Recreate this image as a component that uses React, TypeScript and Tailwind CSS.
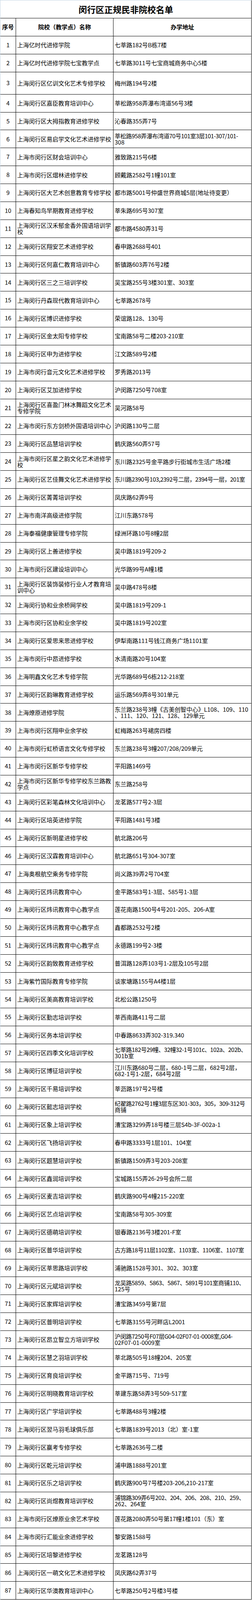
// The browser viewport stops at 4096px, so the rows are a little shorter than in the
// original sheet (4731px) to keep all 87 entries on the page.
const rows: [string, string][] = [
  ["上海亿时代进修学院", "七莘路182号B栋7楼"],
  ["上海亿时代进修学院七宝教学点", "七莘路3011号七宝商城商务中心5楼"],
  ["上海闵行区亿训文化艺术专修学校", "梅州路194号2楼"],
  ["上海闵行区嘉臣教育培训中心", "莘松路958弄瀑布湾道56号3楼"],
  ["上海闵行区大拇指教育进修学校", "沁春路355弄7号"],
  ["上海闵行区易启学文化艺术进修学校", "莘松路958弄瀑布湾道70号101室3层101-307/101-\n308"],
  ["上海市闵行区财会培训中心", "雅致路215号6楼"],
  ["上海市闵行区熠林进修学校", "顾戴路2582号1幢101室"],
  ["上海闵行区大艺术创意教育专修学校", "都市路5001号仲盛世界商城5层(地址待变更）"],
  ["上海春知鸟早期教育进修学校", "莘朱路695号307室"],
  ["上海闵行区汉禾郁金香外国语培训学\n校", "都市路4580弄31号"],
  ["上海闵行区翔安艺术进修学校", "春申路2688号401"],
  ["上海闵行区何嘉仁教育培训中心", "新镇路603弄76号2楼"],
  ["上海闵行区三之三培训学校", "吴宝路255号3楼301室、303室"],
  ["上海闵行丹森现代教育培训中心", "七莘路2678号"],
  ["上海闵行区博识进修学校", "荣谊路128、130号"],
  ["上海闵行区金太阳专修学校", "宝南路58号二楼203-210室"],
  ["上海闵行区申为进修学校", "江文路589号2楼"],
  ["上海市闵行音元文化艺术进修学校", "罗秀路2013号"],
  ["上海闵行区艾加进修学校", "沪闵路7250号708室"],
  ["上海闵行区喜盈门林冰舞蹈文化艺术\n专修学院", "吴河路58号"],
  ["上海市闵行东方剑桥外国语培训中心", "沪闵路130号二层"],
  ["上海闵行区品慧培训学校", "鹤庆路560弄57号"],
  ["上海市闵行区星之韵文化艺术进修学\n校", "东川路2325号金平路步行街城市生活广场2楼"],
  ["上海闵行区艺佳舞文化艺术进修学校", "东川路2390号103,2392号二层，2394号一层，201室"],
  ["上海闵行区菁菁培训学校", "凤庆路62弄9号"],
  ["上海市南洋高级进修学院", "江川东路578号"],
  ["上海泰福健康管理专修学院", "绿洲环路10号8幢2层"],
  ["上海闵行区上善进修学校", "吴中路1819号209-2"],
  ["上海市闵行区建设培训中心", "光华路99号A幢1楼"],
  ["上海闵行区装饰装修行业人才教育培\n训中心", "吴中路478号8楼"],
  ["上海闵行协和业余桥网学校", "吴中路1819号209-1"],
  ["上海市闵行区协和业余学校", "吴中路1819号202室"],
  ["上海闵行区爱思来思进修学校", "伊犁南路111号钱江商务广场1101室"],
  ["上海市闵行中昂进修学校", "水清南路20号104室"],
  ["上海明鑫文化艺术专修学院", "光华路689号6栋212-218室"],
  ["上海闵行区韵琳教育进修学校", "运乐路569弄8号301单元"],
  ["上海燎原进修学院", "东兰路238号3幢《古美创智中心》L108、109、110\n、111、120、121、128、129单元"],
  ["上海市闵行区翔申业余学校", "虹梅路263号裙房四楼"],
  ["上海市闵行虹桥语言文化专修学校", "东兰路238号3幢207/208/209单元"],
  ["上海市闵行区新华专修学校", "平阳路1469号"],
  ["上海市闵行区新华专修学校东兰路教\n学点", "东兰路258号"],
  ["上海闵行区彩笔森林文化培训中心", "龙茗路577号2-3层"],
  ["上海闵行区培英进修学院", "平阳路1481号3楼"],
  ["上海闵行区新明星进修学校", "航北路206号"],
  ["上海闵行区汉霖教育培训中心", "航北路651号304-307室"],
  ["上海奥根航空乘务专修学院", "尚义路39弄2号704室"],
  ["上海闵行区炜讯教育中心", "金平路583号1-3层、585号1-3层"],
  ["上海闵行区炜讯教育中心教学点", "莲花南路1500号4号201-205、206-A室"],
  ["上海闵行区炜讯教育中心教学点", "鑫都路2532号2楼"],
  ["上海闵行区炜讯教育中心教学点", "永德路199号2-3楼"],
  ["上海闵行区韵致教育进修学校", "普洱路128弄103号1-2层及105号2层"],
  ["上海紫竹国际教育专修学院", "谈家塘路155号A4楼1层"],
  ["上海闵行区美高教育培训学校", "北松公路1250号"],
  ["上海闵行区勤志培训学校", "莘西南路411号二层"],
  ["上海闵行区务本培训学校", "中春路8633弄302-319.340"],
  ["上海闵行区四季文化培训学校", "七莘路182号29幢、32幢32-1号101c、102a、202b、\n301b室"],
  ["上海闵行区博征培训学校", "江川东路680号二层，680-1号二层，682号2层，\n682-1号1-2层，684号2层"],
  ["上海闵行区千易培训学校", "莘沥路197号2号楼"],
  ["上海闵行区懿志培训学校", "纪翟路2762号1幢3层东区301-303，305，309-312号\n商铺"],
  ["上海闵行区象上培训学校", "漕宝路3299弄18号楼三层S4b-3F-002a-1"],
  ["上海闵行区飞扬培训学校", "春申路3333号1层101、104室"],
  ["上海闵行区题慧培训学校", "新镇路1509弄3号203-208室"],
  ["上海闵行区鑫润培训学校", "宝城路155弄26-29号会所二层"],
  ["上海闵行区麦吉培训学校", "鹤庆路900号4幢215-220室"],
  ["上海闵行区艺点培训学校", "宝南路58号305-309室"],
  ["上海闵行区德萌培训学校", "银春路2136号3楼201-F室"],
  ["上海闵行区普华培训学校", "古方路18号11层1102室、1103室、1106室、1107室"],
  ["上海闵行区莘思路培训学校", "浦驰路1528号301、302、303室"],
  ["上海闵行区元斌培训学校", "龙吴路5859、5863、5867、5891号101室商铺110、\n125号"],
  ["上海闵行区家辉培训学校", "漕宝路3459号第7层"],
  ["上海闵行区普明培训学校", "七莘路3155号河畔店L2001"],
  ["上海闵行区昂立智立方培训学校", "沪闵路7250号F07层G04-02F07-01-0008室,G04-\n02F07-01-0009室"],
  ["上海闵行区慧之羽培训学校", "莘北路505号18幢204、205室"],
  ["上海闵行区育良培训学校", "金平路715号、719号"],
  ["上海闵行区明晓教育培训学校", "莘建东路58弄3号509-517室"],
  ["上海闵行区广学培训学校", "七莘路488号3幢2楼"],
  ["上海闵行区翌马羽毛球俱乐部", "七莘路1839号2013（北）室-1室"],
  ["上海闵行区赢考专修学校", "七莘路2636号二楼"],
  ["上海闵行区乾元培训学校", "浦申路1888号201室"],
  ["上海闵行区乐之培训学校", "鹤庆路900号7号楼203-206,210-217室"],
  ["上海闵行区尚煜教育培训学校", "浦锦路309弄6号202、204、206、208、210、259、\n262、264室"],
  ["上海市闵行区燎原业余艺术学校", "莲花路2080弄50号第17幢1楼101（东）室"],
  ["上海市闵行汇能业余进修学校", "黎安路1588号"],
  ["上海闵行区培黎进修学校", "龙茗路128号"],
  ["上海闵行区一萌文化艺术进修学校", "凤庆路62弄37号"],
  ["上海闵行区华澳教育培训中心", "七莘路250号2号楼3号楼"],
];

const Lines = ({ text }: { text: string }) => (
  <div className="leading-[16px]">
    {text.split("\n").map((l, i) => (
      <div key={i} className={l.length > 30 ? "whitespace-nowrap tracking-[-0.5px]" : "whitespace-nowrap"}>
        {l}
      </div>
    ))}
  </div>
);

export default function App() {
  return (
    <div className="w-[643px] bg-white text-black border-l border-t border-[#c3d3e3] font-['Noto_Sans_CJK_SC',sans-serif] text-[15px]">
      {/* title */}
      <div className="h-[45.88px] border-b border-r border-black flex items-center justify-center">
        <h1 className="text-[22px] font-bold">闵行区正规民非院校名单</h1>
      </div>

      {/* header */}
      <div className="h-[45.88px] flex border-b border-black font-bold">
        <div className="w-[40px] shrink-0 border-r border-black flex items-center justify-center">序号</div>
        <div className="w-[249px] shrink-0 border-r border-black flex items-center justify-center">
          院校（教学点）名称
        </div>
        <div className="flex-1 border-r border-black flex items-center justify-center">办学地址</div>
      </div>

      {rows.map(([name, addr], i) => (
        <div
          key={i}
          className={i === 2 ? "h-[57.14px] flex border-b border-black" : "h-[45.88px] flex border-b border-black"}
        >
          <div className="w-[40px] shrink-0 border-r border-black flex items-center justify-center">{i + 1}</div>
          <div className="w-[249px] shrink-0 border-r border-black flex items-center pl-[3px] overflow-hidden">
            <Lines text={name} />
          </div>
          <div className="flex-1 min-w-0 border-r border-black flex items-center pl-[3px] overflow-hidden">
            <Lines text={addr} />
          </div>
        </div>
      ))}
    </div>
  );
}
